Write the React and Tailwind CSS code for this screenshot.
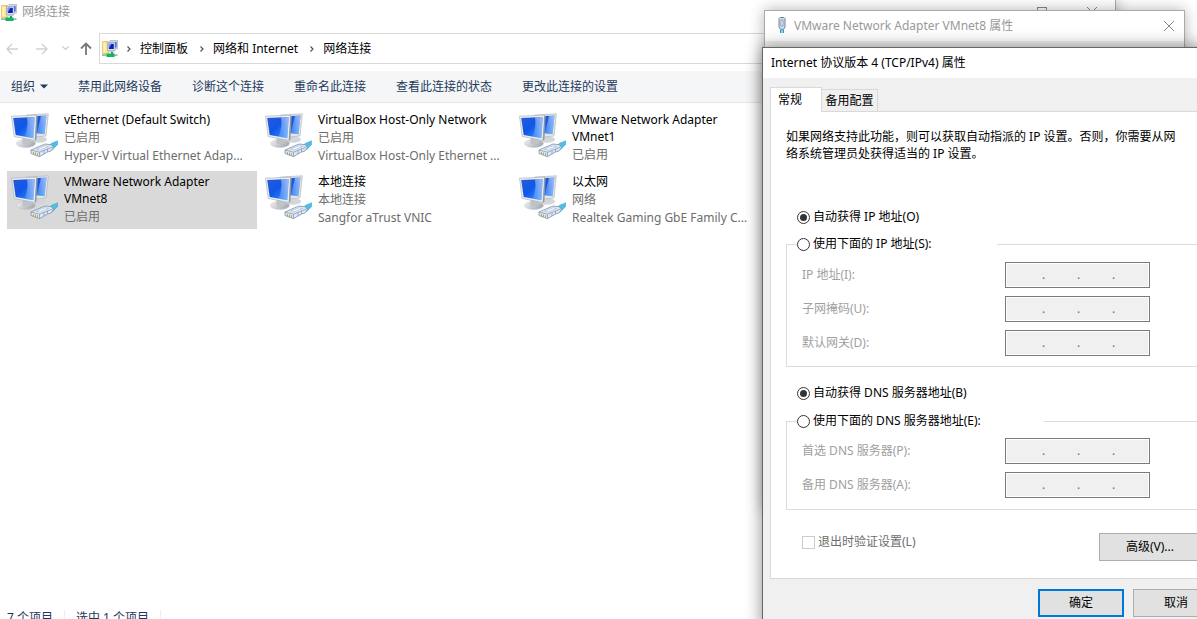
import React from 'react';

const adapters = [
  { name: 'vEthernet (Default Switch)', status: '已启用', device: 'Hyper-V Virtual Ethernet Adap...' },
  { name: 'VirtualBox Host-Only Network', status: '已启用', device: 'VirtualBox Host-Only Ethernet ...' },
  { name: 'VMware Network Adapter VMnet1', status: '已启用' },
  { name: 'VMware Network Adapter VMnet8', status: '已启用', selected: true },
  { name: '本地连接', status: '本地连接', device: 'Sangfor aTrust VNIC' },
  { name: '以太网', status: '网络', device: 'Realtek Gaming GbE Family C...' },
];

const commands = ['禁用此网络设备', '诊断这个连接', '重命名此连接', '查看此连接的状态', '更改此连接的设置'];

const crumbs = ['控制面板', '网络和 Internet', '网络连接'];

const FolderIcon = () => (
  <svg width="16" height="17" viewBox="0 0 16 17" className="shrink-0" aria-hidden="true">
    <path d="M0.500 1.500h6v12h-6z" fill="#fbe38b" stroke="#e3bf58" strokeWidth="0.800" />
    <path d="M1.500 3h2v9h-2z" fill="#fff3bd" />
    <rect x="8" y="0.500" width="7.500" height="8.500" fill="#c9d6ee" stroke="#b4bccb" strokeWidth="0.800" />
    <rect x="12.500" y="2" width="2" height="5.500" fill="#2c4fe0" />
    <rect x="5.500" y="2.500" width="7.500" height="8" fill="#dfe4ec" stroke="#a5adba" strokeWidth="0.800" />
    <rect x="6.800" y="3.800" width="5" height="5.200" fill="#0c1fb8" />
    <path d="M6.800 3.800h2.700L7.500 7.500h-.7z" fill="#6d95fa" />
    <path d="M7 11h5l1 1.300H6z" fill="#c5cad3" />
    <path d="M9 12h2v2H9z" fill="#17a35e" />
    <path d="M0 14.300h15.500v1.600H0z" fill="#8fb3a0" />
    <path d="M4.500 13.500h8v3.500h-8z" fill="#12b566" />
  </svg>
);

const AdapterIcon = () => (
  <svg width="48" height="50" viewBox="0 0 48 50" className="shrink-0" aria-hidden="true">
    <defs>
      <linearGradient id="screen" x1="0" y1="0" x2="1" y2="1">
        <stop offset="0" stopColor="#2a5bd6" />
        <stop offset="0.45" stopColor="#0f57e8" />
        <stop offset="1" stopColor="#3d97ff" />
      </linearGradient>
      <linearGradient id="glare" x1="0" y1="1" x2="1" y2="0">
        <stop offset="0" stopColor="#ffffff" stopOpacity="0.1" />
        <stop offset="1" stopColor="#ffffff" stopOpacity="0.6" />
      </linearGradient>
      <linearGradient id="stand" x1="0" y1="0" x2="1" y2="0.400">
        <stop offset="0" stopColor="#f1f2f3" />
        <stop offset="1" stopColor="#a9adb2" />
      </linearGradient>
    </defs>
    <ellipse cx="29" cy="30.500" rx="8" ry="3.200" fill="#d3d6d9" />
    <path d="M16.500 6 38.300 4.800 36 27l-11 1-8-4z" fill="#e4e6e9" stroke="#b3b7bc" strokeWidth="0.700" />
    <path d="M18.500 7.500 36.500 6.500 34.600 25.200 20 23.500z" fill="url(#screen)" />
    <path d="M31 6.800 36.500 6.500 34.600 25.200 27 24.300z" fill="url(#glare)" />
    <ellipse cx="16" cy="34.500" rx="9.500" ry="4" fill="url(#stand)" stroke="#c4c7cb" strokeWidth="0.500" />
    <path d="M12.500 27.500l8.500 1-1 6c-2 1.500-5.500 1.500-7.500 0z" fill="#bfc3c8" />
    <path d="M1.500 7.200 26.600 6.200 25 31.500 4.200 27.500z" fill="#eceef0" stroke="#b0b4b9" strokeWidth="0.700" />
    <path d="M25 31.500 26.600 6.200l1.200.7-1.500 23.900z" fill="#8e9399" />
    <path d="M3.200 8.900 24.800 8.100 23.400 29.200 5.700 26z" fill="url(#screen)" />
    <path d="M17 8.400 24.800 8.100 23.400 29.200 14.500 27.600q4-9 2.500-19.200z" fill="url(#glare)" />
    <path d="M37.500 37.500l4.500-3.500 6.500-2.500-1.500 3.500 1.500-.3-6 6z" fill="#4fbde6" stroke="#3ba5d2" strokeWidth="0.500" />
    <path d="M21 41l4-1.800 10-4.200 6.500.8 2 2.700-2.500 3.500-3.500 1-8 4.700-8.500-3.200z" fill="#dfe7f2" stroke="#7a93b5" strokeWidth="0.800" />
    <path d="M21 41l8.500 2.200v4.300M29.500 43.200l13-5.200M34 41.500v3.500M37.500 40v3" fill="none" stroke="#7a93b5" strokeWidth="0.700" />
    <path d="M23 43h1v2.300h-1zM25 43.600h1v2.400h-1zM27 44.200h1v2.300h-1z" fill="#b9a93f" />
    <path d="M26.500 40.200l8.500-3.400 3.500.7-8.500 3.500z" fill="#fafcff" stroke="#93a9c6" strokeWidth="0.500" />
  </svg>
);

const PlugIcon = () => (
  <svg width="10" height="18" viewBox="0 0 10 18" className="shrink-0" aria-hidden="true">
    <path d="M2 1.500 3 0.500h4l1 1v8.500l-1.500 2.500h-3L2 10z" fill="#cfdbe9" stroke="#6f849f" />
    <path d="M4 3h2v6H4z" fill="#fff" stroke="#7b8ea8" strokeWidth="0.800" />
    <path d="M3 13h1.500v3H3zM5.500 13H7v3H5.500z" fill="#2aa3d4" />
  </svg>
);

const ChevronIcon = () => (
  <svg width="6" height="8" viewBox="0 0 6 8" className="shrink-0" aria-hidden="true">
    <path d="M1.500 1.500 4 4 1.500 6.500" fill="none" stroke="#555" strokeWidth="1.200" />
  </svg>
);

const CloseIcon = () => (
  <svg width="12" height="12" viewBox="0 0 12 12" aria-hidden="true">
    <path d="M1 1l10 10M11 1 1 11" stroke="#888" fill="none" />
  </svg>
);

const AdapterItem = ({ adapter }) => (
  <li className={`flex h-[58px] gap-1.5 px-[3px] ${adapter.selected ? 'bg-[#d9d9d9]' : ''}`}>
    <AdapterIcon />
    <div className="min-w-0 flex-1 pt-0.5 text-[#6d6d6d]">
      <p className="pb-px leading-[17px] text-black">{adapter.name}</p>
      <p className="leading-[18px]">{adapter.status}</p>
      {adapter.device && <p className="whitespace-nowrap leading-[18px]">{adapter.device}</p>}
    </div>
  </li>
);

const ExplorerWindow = () => (
  <main className="absolute top-0 left-0 right-[81px] -bottom-[10px] flex flex-col border-r border-[#aaa] bg-white shadow-[0_0_14px_rgba(0,0,0,0.3)]">
    <header className="flex h-6 items-center gap-1 pl-px text-[#999]">
      <FolderIcon />
      <h1 className="flex-1 pl-px">网络连接</h1>
      <button aria-label="最大化" className="flex w-[46px] justify-center">
        <span className="size-[10px] border border-[#888]"></span>
      </button>
      <button aria-label="关闭" className="flex w-[46px] justify-center">
        <CloseIcon />
      </button>
    </header>

    <nav className="mt-[9px] flex h-[31px] items-center">
      <div className="flex w-[99px] shrink-0 items-center pl-1.5">
        <button aria-label="后退" className="w-[30px]">
          <svg width="12" height="12" viewBox="0 0 12 12">
            <path d="M12 6H1M6 1 1 6l5 5" fill="none" stroke="#d2d2d2" strokeWidth="1.500" />
          </svg>
        </button>
        <button aria-label="前进" className="w-[26px]">
          <svg width="12" height="12" viewBox="0 0 12 12">
            <path d="M0 6h11M6 1l5 5-5 5" fill="none" stroke="#d2d2d2" strokeWidth="1.500" />
          </svg>
        </button>
        <button aria-label="最近位置" className="w-[18px]">
          <svg width="7" height="5" viewBox="0 0 7 5">
            <path d="M0.500 0.500 3.500 3.500l3-3" fill="none" stroke="#ccc" strokeWidth="1.200" />
          </svg>
        </button>
        <button aria-label="上移">
          <svg width="12" height="13" viewBox="0 0 12 13">
            <path d="M6 13V1.500M1 6.500l5-5 5 5" fill="none" stroke="#777" strokeWidth="1.800" />
          </svg>
        </button>
      </div>
      <ol className="flex h-[31px] flex-1 items-center border border-[#d9d9d9] pl-0.5">
        <li className="pr-2">
          <FolderIcon />
        </li>
        {crumbs.map((crumb) => (
          <li key={crumb} className="flex items-center gap-2 pr-[11px]">
            <ChevronIcon />
            <a href="#" className="text-black">{crumb}</a>
          </li>
        ))}
      </ol>
    </nav>

    <div className="mt-[7px] flex h-8 shrink-0 items-center gap-[30px] border-b border-[#e5e7ea] bg-[#f5f6f7] pl-[11px] text-[#1e395b]">
      <button className="flex items-center gap-[5px]">
        组织
        <svg width="8" height="5" viewBox="0 0 8 5" aria-hidden="true">
          <path d="M0 0.500h8L4 4.500z" fill="#1e395b" />
        </svg>
      </button>
      {commands.map((command) => (
        <button key={command}>{command}</button>
      ))}
    </div>

    <ul className="mt-1.5 grid flex-1 grid-cols-[repeat(3,250px)] content-start gap-1 pl-[7px]">
      {adapters.map((adapter) => (
        <AdapterItem key={adapter.name} adapter={adapter} />
      ))}
    </ul>

    <footer className="flex h-[22px] shrink-0 items-center gap-[11px] pl-[7px] text-[#1e395b]">
      <span>7 个项目</span>
      <span className="h-4 w-px bg-[#eee]"></span>
      <span>选中 1 个项目</span>
      <span className="h-4 w-px bg-[#eee]"></span>
    </footer>
  </main>
);

const AdapterDialog = () => (
  <section className="absolute top-[10px] right-3 h-[500px] w-[421px] border border-[#aaa] bg-[#f0f0f0] shadow-[0_0_14px_rgba(0,0,0,0.3)]">
    <header className="flex h-[30px] items-center bg-white pl-3 pr-[9px] text-[#999]">
      <PlugIcon />
      <h2 className="flex-1 pl-[7px]">VMware Network Adapter VMnet8 属性</h2>
      <button aria-label="关闭">
        <CloseIcon />
      </button>
    </header>
  </section>
);

const Radio = ({ name, label, defaultChecked }) => (
  <label className="flex items-center gap-[3px] leading-4 text-black">
    <input
      type="radio"
      name={name}
      defaultChecked={defaultChecked}
      className="size-[13px] shrink-0 appearance-none rounded-full border border-[#333] bg-white bg-clip-content p-[2px] checked:bg-[#333]"
    />
    {label}
  </label>
);

const AddressField = ({ id, label }) => (
  <div className="flex h-[26px] items-center">
    <label htmlFor={id} className="w-[203px] text-[#a0a0a0]">{label}</label>
    <div className="flex h-[26px] w-[145px] items-center border border-[#7a7a7a] bg-[#f0f0f0] pl-1 text-[#6d6d6d] ring-1 ring-white ring-inset">
      {[0, 1, 2, 3].map((part) => (
        <React.Fragment key={part}>
          {part > 0 && <span className="w-[3px] text-center">.</span>}
          <input
            id={part === 0 ? id : undefined}
            aria-label={part === 0 ? undefined : `${label} ${part + 1}`}
            disabled
            className="w-8 min-w-0 text-center"
          />
        </React.Fragment>
      ))}
    </div>
  </div>
);

const Ipv4Dialog = () => (
  <section className="absolute top-[47px] -right-[35px] w-[470px] border border-[#666] bg-[#f0f0f0] pb-3 shadow-[0_0_16px_rgba(0,0,0,0.45)]">
    <h2 className="flex h-[30px] items-center bg-white pl-2 text-black">Internet 协议版本 4 (TCP/IPv4) 属性</h2>

    <div role="tablist" className="flex items-end pl-[7px] pt-[9px]">
      <button role="tab" aria-selected="true" className="-mb-px h-[25px] w-[52px] border border-b-0 border-[#d9d9d9] bg-white pr-3 text-black">
        常规
      </button>
      <button role="tab" aria-selected="false" className="h-[22px] w-14 border border-b-0 border-l-0 border-[#d9d9d9] text-black">
        备用配置
      </button>
    </div>

    <div className="mx-[7px] h-[468px] border border-[#d9d9d9] bg-white px-[15px] pt-4">
      <p className="w-[396px] leading-[17px] text-black">
        如果网络支持此功能，则可以获取自动指派的 IP 设置。否则，你需要从网络系统管理员处获得适当的 IP 设置。
      </p>

      <div className="mt-[47px] pl-[11px]">
        <Radio name="ip" label="自动获得 IP 地址(O)" defaultChecked />
      </div>
      <fieldset className="mt-[11px] h-[131px] border border-[#dcdcdc] pl-[15px]">
        <legend className="-ml-[5px] w-[200px]">
          <Radio name="ip" label="使用下面的 IP 地址(S):" />
        </legend>
        <div className="flex flex-col gap-2 pt-[10px]">
          <AddressField id="ip-address" label="IP 地址(I):" />
          <AddressField id="subnet-mask" label="子网掩码(U):" />
          <AddressField id="gateway" label="默认网关(D):" />
        </div>
      </fieldset>

      <div className="mt-[18px] pl-[11px]">
        <Radio name="dns" label="自动获得 DNS 服务器地址(B)" defaultChecked />
      </div>
      <fieldset className="mt-3 h-[97px] border border-[#dcdcdc] pl-[15px]">
        <legend className="-ml-[5px] w-[247px]">
          <Radio name="dns" label="使用下面的 DNS 服务器地址(E):" />
        </legend>
        <div className="flex flex-col gap-2 pt-[9px]">
          <AddressField id="dns-primary" label="首选 DNS 服务器(P):" />
          <AddressField id="dns-secondary" label="备用 DNS 服务器(A):" />
        </div>
      </fieldset>

      <div className="mt-[23px] flex items-start pl-4">
        <label className="flex w-[297px] items-center gap-[3px] text-[#6d6d6d]">
          <input type="checkbox" disabled className="size-[13px] appearance-none border border-[#ccc] bg-white" />
          退出时验证设置(L)
        </label>
        <button className="h-7 w-[102px] shrink-0 border border-[#adadad] bg-[#e1e1e1] text-black">高级(V)...</button>
      </div>
    </div>

    <div className="mt-2.5 flex justify-end gap-[9px] pr-3">
      <button className="h-7 w-[86px] border-2 border-[#0078d7] bg-[#e1e1e1] text-black">确定</button>
      <button className="h-7 w-[86px] border border-[#adadad] bg-[#e1e1e1] text-black">取消</button>
    </div>
  </section>
);

export default function App() {
  return (
    <div className="relative h-screen overflow-hidden bg-white font-['Noto_Sans','Noto_Sans_CJK_SC',sans-serif] text-[12px] leading-[18px]">
      <ExplorerWindow />
      <AdapterDialog />
      <Ipv4Dialog />
    </div>
  );
}
